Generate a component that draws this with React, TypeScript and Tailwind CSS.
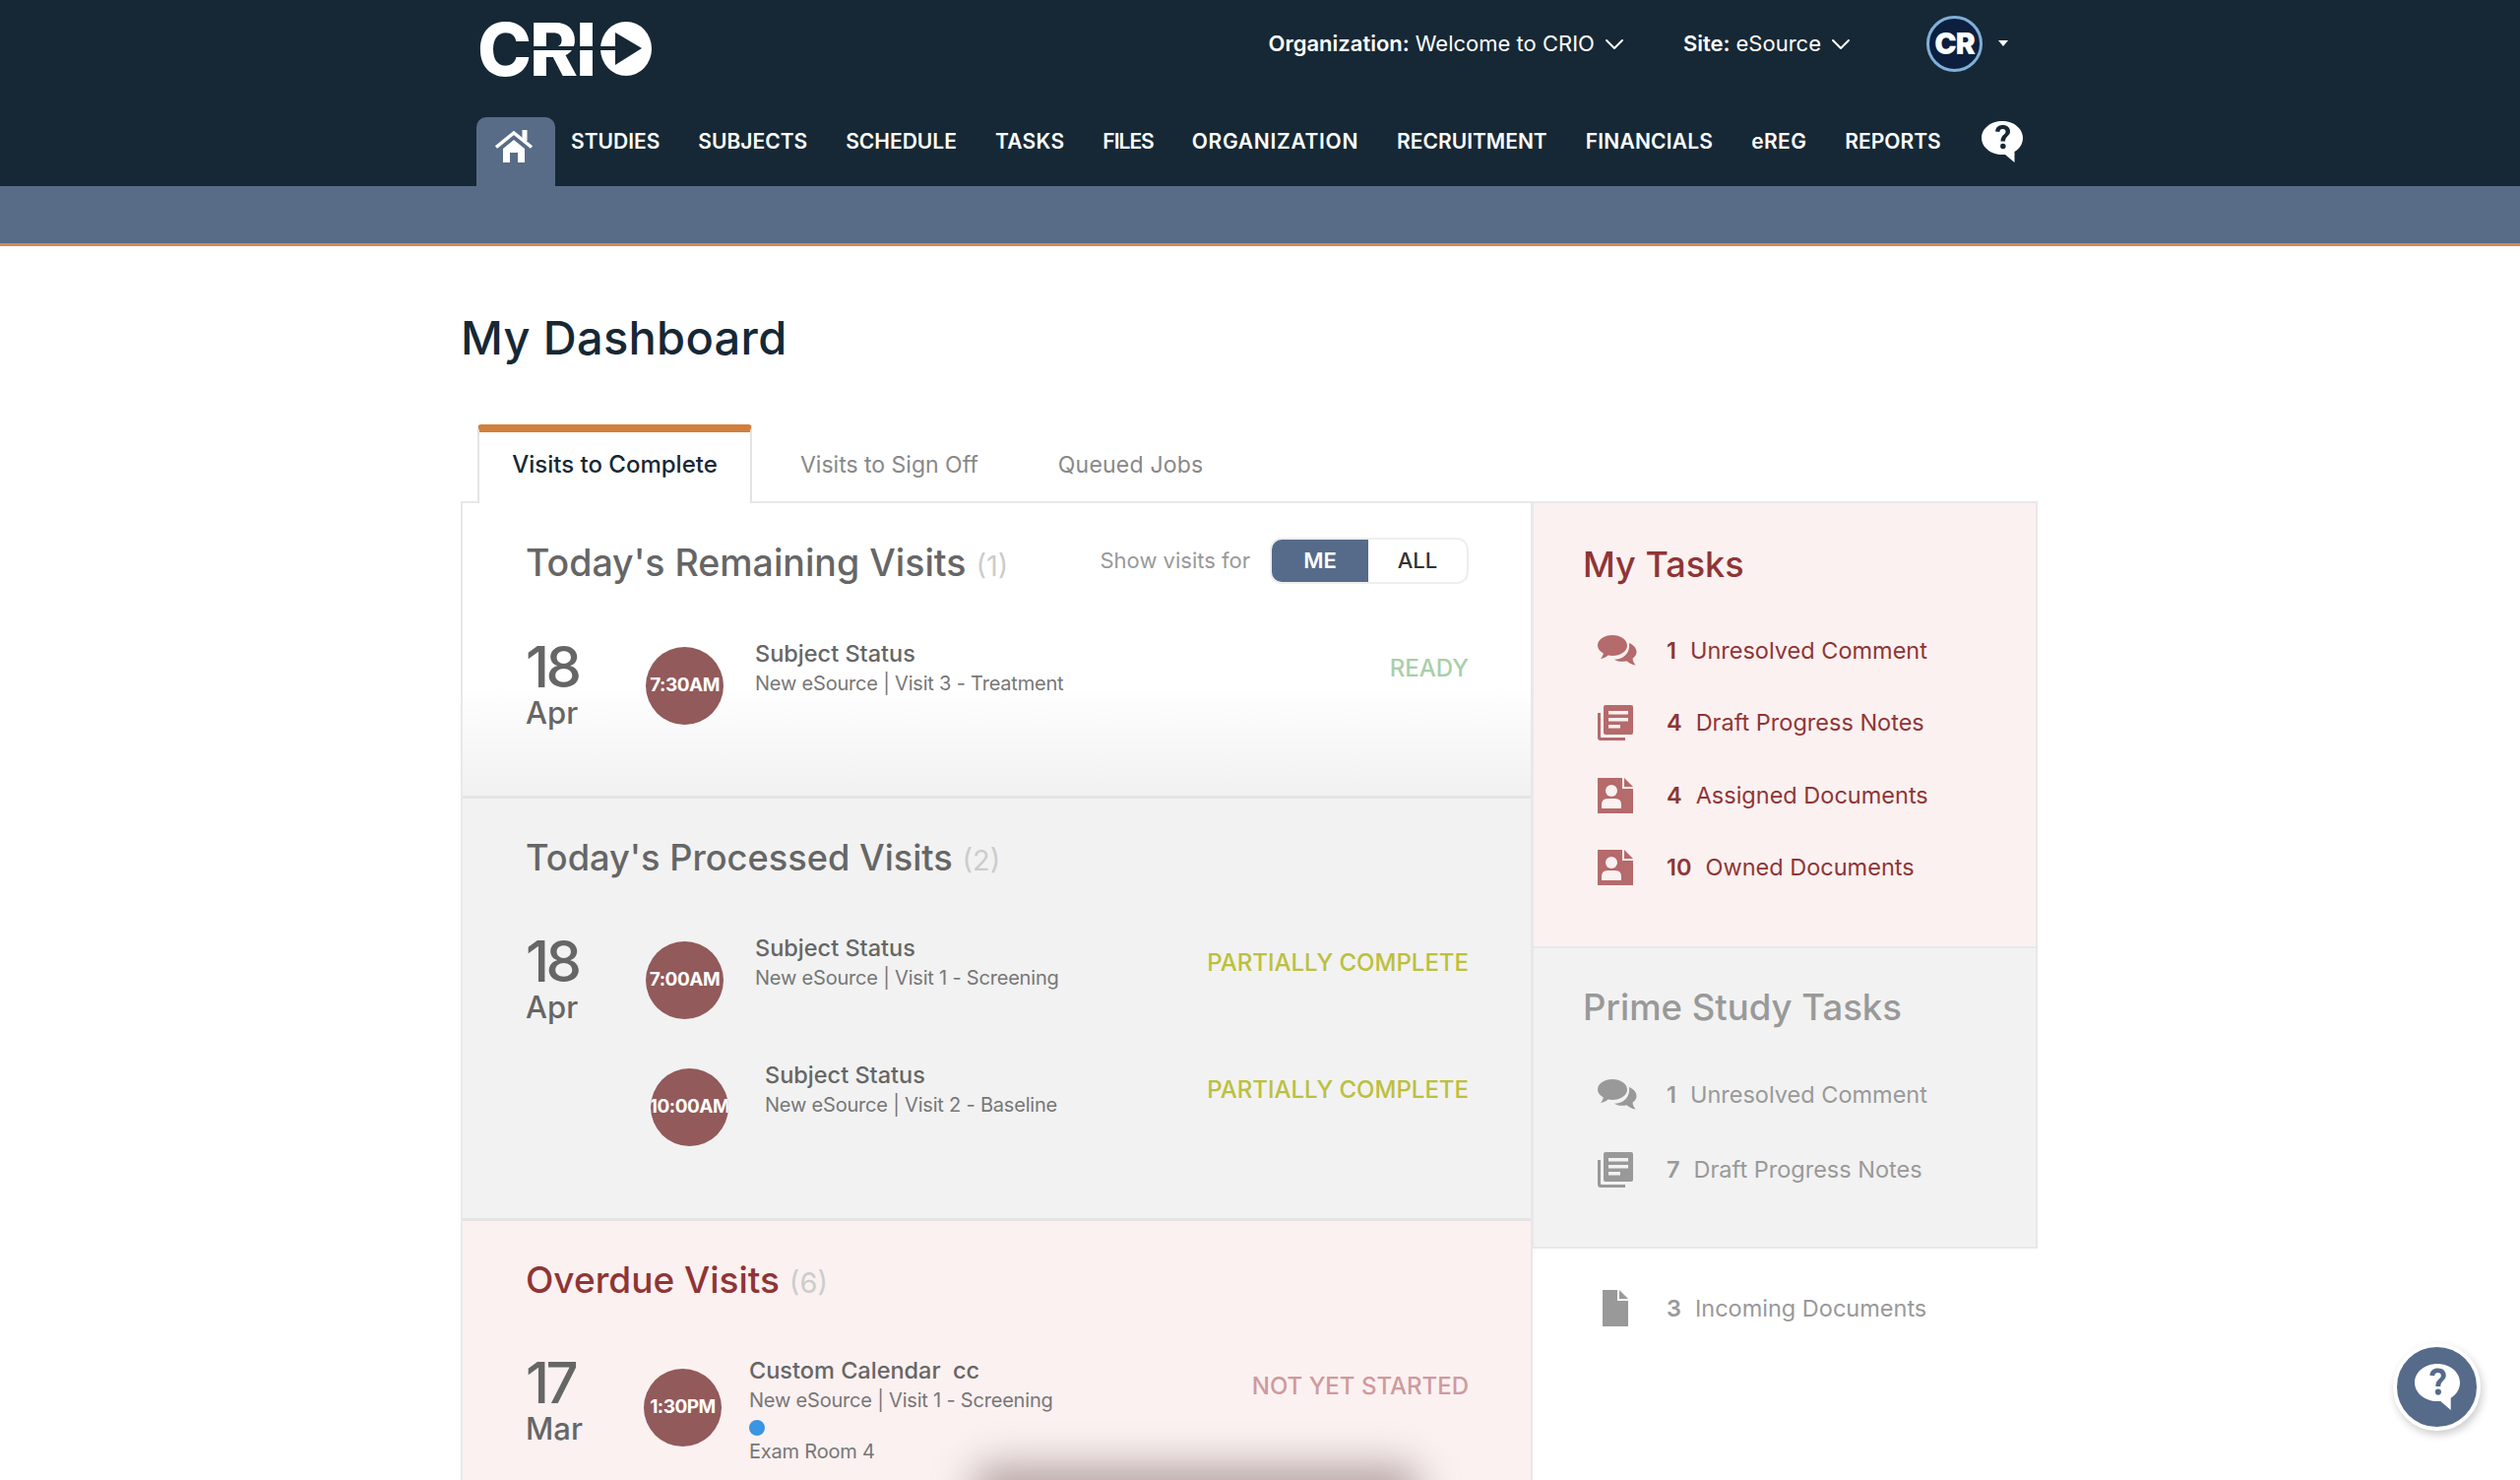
import { ChevronDown } from 'lucide-react';

const navItems = [
  { label: 'STUDIES', spacing: 'tracking-normal' },
  { label: 'SUBJECTS', spacing: 'tracking-normal' },
  { label: 'SCHEDULE', spacing: 'tracking-normal' },
  { label: 'TASKS', spacing: 'tracking-[0.3px]' },
  { label: 'FILES', spacing: 'tracking-[-1px]' },
  { label: 'ORGANIZATION', spacing: 'tracking-[0.7px]' },
  { label: 'RECRUITMENT', spacing: 'tracking-normal' },
  { label: 'FINANCIALS', spacing: 'tracking-[0.2px]' },
  { label: 'eREG', spacing: 'tracking-[0.4px]' },
  { label: 'REPORTS', spacing: 'tracking-normal' },
];

function HomeIcon() {
  return (
    <svg width="40" height="34" viewBox="0 0 40 34" fill="white">
      <path d="M9 20 L20 11 L31 20 V34 H24 V24 H16 V34 H9 Z" />
      <path d="M2 18.5 L20 4 L38 18.5" fill="none" stroke="white" strokeWidth="3.5" />
      <rect x="28.5" y="1" width="5" height="11" />
    </svg>
  );
}

function HelpBubble({ fill, mark, width, height }: { fill: string; mark: string; width: number; height: number }) {
  return (
    <svg width={width} height={height} viewBox="0 0 42 42" preserveAspectRatio="none">
      <path d="M21 0 C32.500 0 42 7.500 42 17 C42 23.500 38 28.500 33.500 31 L33.500 42 L24 34 C23 34 22 34 21 34 C9.500 34 0 26.500 0 17 C0 7.500 9.500 0 21 0 Z" fill={fill} />
      <path d="M14 10.500 C14.500 6 17.500 4 21.500 4 C26 4 29 6.500 29 10.500 C29 15 24 15.500 24 20.500 H19.500 C19.500 14 24.500 14 24.500 10.800 C24.500 9 23.500 8 21.500 8 C19.500 8 18.500 9.200 18.300 11 Z" fill={mark} />
      <circle cx="21.800" cy="25.500" r="2.800" fill={mark} />
    </svg>
  );
}

function CommentsIcon({ color }: { color: string }) {
  return (
    <svg width="40" height="31" viewBox="0 0 40 31" fill={color}>
      <path d="M15 0 C23 0 30 4.500 30 10.500 C30 16.500 23 21 15 21 C13.500 21 12 20.800 10.700 20.500 C8.500 22.500 6 23.500 3 24 C4.500 22.300 5.500 20.500 5.800 18.500 C2.300 16.500 0 13.700 0 10.500 C0 4.500 7 0 15 0 Z" />
      <path d="M32 8 C36.500 10 39.500 13.300 39.500 17 C39.500 19.700 38 22 35.500 23.800 C35.800 26 36.800 28.500 38.500 30.500 C35 30 32 28.500 29.500 26.300 C27.500 26.800 25 27 22.500 26.700 C20.500 26.500 18.500 25.800 17 24.800 C25 24.800 33.500 19 32 8 Z" />
    </svg>
  );
}

function NotesIcon({ color, bg }: { color: string; bg: string }) {
  return (
    <svg width="36" height="36" viewBox="0 0 36 36">
      <path d="M0 8 H3 V32 Q3 33 4 33 H28 V36 H3 Q0 36 0 33 Z" fill={color} />
      <rect x="6" y="0" width="30" height="30" rx="2" fill={color} />
      <rect x="11" y="6" width="20" height="3.500" fill={bg} />
      <rect x="11" y="13" width="20" height="3.500" fill={bg} />
      <rect x="11" y="20" width="12" height="3.500" fill={bg} />
    </svg>
  );
}

function PersonDocIcon({ color, bg }: { color: string; bg: string }) {
  return (
    <svg width="36" height="36" viewBox="0 0 36 36">
      <path d="M0 0 H25 V11 H36 V36 H0 Z" fill={color} />
      <path d="M27 0 L36 9 H27 Z" fill={color} />
      <circle cx="14" cy="13" r="6" fill={bg} />
      <path d="M4 31 V27 Q4 21 10 21 H18 Q24 21 24 27 V31 Z" fill={bg} />
    </svg>
  );
}

function FileIcon({ color }: { color: string }) {
  return (
    <svg width="26" height="37" viewBox="0 0 26 37">
      <path d="M0 0 H15 V11 H26 V37 H0 Z" fill={color} />
      <path d="M17 0 L26 9 H17 Z" fill={color} />
    </svg>
  );
}

function CrioLogo() {
  return (
    <div className="relative flex h-[55px] w-[178px] items-center">
      <span className="pl-[1px] font-['Inter',sans-serif] text-[74px] leading-none font-extrabold tracking-[-2px] text-white">CRI</span>
      <span className="absolute left-[56px] top-[25px] h-[4px] w-[76px] bg-[#162835]" />
      <svg className="absolute left-[126px] top-0" width="52" height="55" viewBox="0 0 52 55">
        <ellipse cx="26" cy="27.500" rx="26" ry="27.500" fill="white" />
        <path d="M0 25 H15 V11 L42 27 L15 44 V29 H0 Z" fill="#162835" />
      </svg>
    </div>
  );
}

function VisitRow({ time, title, sub, status, statusClass, room, indent }: {
  time: string;
  title: string;
  sub: string;
  status: string;
  statusClass: string;
  room?: string;
  indent?: boolean;
}) {
  return (
    <div className="flex flex-1 items-start">
      <div className={`flex h-[79px] w-[79px] shrink-0 items-center justify-center overflow-hidden rounded-full bg-[#925a5a] ${indent ? 'ml-[5px]' : ''}`}>
        <span className="text-[19px] font-bold whitespace-nowrap tracking-[-0.5px] text-white">{time}</span>
      </div>
      <div className={`flex-1 ${room ? 'ml-[28px] -mt-[12px]' : indent ? 'ml-[37px] -mt-[7px]' : 'ml-[32px] -mt-[7px]'}`}>
        <div className="text-[23.5px] leading-[28px] font-medium whitespace-pre text-[#666]">{title}</div>
        <div className="mt-[2px] text-[20px] leading-[28px] tracking-[-0.2px] text-[#777]">{sub}</div>
        {room && (
          <>
            <div className="mt-[6px] h-[16px] w-[16px] rounded-full bg-[#3b95e0]" />
            <div className="mt-[2px] text-[20px] leading-[28px] tracking-[-0.2px] text-[#777]">{room}</div>
          </>
        )}
      </div>
      <div className={`text-[24px] leading-[30px] font-medium whitespace-nowrap ${room ? 'mt-[3px]' : 'mt-[7px]'} ${statusClass}`}>{status}</div>
    </div>
  );
}

function DateBlock({ day, month, overdue }: { day: string; month: string; overdue?: boolean }) {
  return (
    <div className={`shrink-0 text-[#666] ${overdue ? 'w-[120px] -mt-[14px]' : 'w-[122px] -mt-[8px]'}`}>
      <div className="text-[58px] leading-[56px] font-medium tracking-[-3.5px]">{day}</div>
      <div className="mt-[2px] text-[31px] leading-[34px] font-medium">{month}</div>
    </div>
  );
}

function TaskRow({ icon, count, label, rowClass }: {
  icon: React.ReactNode;
  count: string;
  label: string;
  rowClass: string;
}) {
  return (
    <div className={`flex h-[37px] items-center text-[23.5px] ${rowClass}`}>
      <div className="flex w-[85px] shrink-0 items-center pl-[15px]">{icon}</div>
      <span className="font-semibold">{count}</span>
      <span className="ml-[14px]">{label}</span>
    </div>
  );
}

export default function App() {
  return (
    <div className="relative h-[1503px] w-full overflow-hidden bg-white font-['Inter',sans-serif]">
      {/* Header */}
      <header className="h-[189px] bg-[#162835] pl-[484px] text-white">
        <div className="flex h-[119px] items-start justify-between pr-[520px]">
          <div className="pt-[22px]">
            <CrioLogo />
          </div>
          <div className="flex items-center pt-[16px]">
            <div className="flex items-center text-[22px] leading-[57px]">
              <span className="font-semibold">Organization:</span>
              <span className="ml-[6px]">Welcome to CRIO</span>
              <ChevronDown className="ml-[4px]" size={32} strokeWidth={1.500} />
            </div>
            <div className="ml-[54px] flex items-center text-[22px] leading-[57px]">
              <span className="font-semibold">Site:</span>
              <span className="ml-[6px]">eSource</span>
              <ChevronDown className="ml-[4px]" size={32} strokeWidth={1.500} />
            </div>
            <div className="ml-[71px] flex h-[57px] w-[57px] items-center justify-center rounded-full border-[3px] border-[#7fb0d8] bg-[#0c1f3f]">
              <span className="text-[30px] font-black tracking-[-1px]">CR</span>
            </div>
            <div className="mb-[1px] ml-[16px] h-0 w-0 border-x-[5px] border-t-[6px] border-x-transparent border-t-white" />
          </div>
        </div>
        <nav className="flex h-[70px] items-start">
          <div className="flex h-[70px] w-[80px] justify-center rounded-t-[10px] bg-[#586c88] pr-[4px] pt-[12px]">
            <HomeIcon />
          </div>
          <div className="ml-[16px] flex items-center gap-[39px] pt-[10px] text-[21px] leading-[30px] font-semibold">
            {navItems.map((item) => (
              <span key={item.label} className={item.spacing}>{item.label}</span>
            ))}
          </div>
          <div className="ml-[41px] pt-[4px]">
            <HelpBubble fill="white" mark="#162835" width={42} height={42} />
          </div>
        </nav>
      </header>
      <div className="h-[61px] border-b-[3px] border-[#d18a50] bg-[#586c88]" />

      {/* Content */}
      <main className="ml-[468px] w-[1601px]">
        <h1 className="pt-[65px] text-[47px] leading-[56px] font-medium tracking-[0.3px] text-[#162835]">My Dashboard</h1>

        <div className="mt-[60px] flex h-[78px] pl-[17px]">
          <div className="relative z-10 -mb-[2px] w-[279px] rounded-t-[4px] border-x-2 border-t-[8px] border-x-[#e4e4e4] border-t-[#d1803c] bg-white pt-[18px] text-center text-[24px] leading-[30px] font-medium text-[#162835]">
            Visits to Complete
          </div>
          <div className="flex gap-[81px] pl-[49px] pt-[26px] text-[23px] leading-[30px] text-[#888]">
            <span>Visits to Sign Off</span>
            <span className="tracking-[0.2px]">Queued Jobs</span>
          </div>
        </div>

        <div className="flex items-start">
          {/* Visits column */}
          <div className="h-[1000px] w-[1089px] shrink-0 border-x-2 border-t-2 border-[#e8e8e8]">
            <section className="h-[300px] border-b-[3px] border-[#e4e4e4] bg-gradient-to-b from-white from-[62%] to-[#f1f1f1] pl-[64px] pr-[63px]">
              <div className="flex h-[118px] items-start justify-between pt-[36px]">
                <h2 className="text-[37.5px] leading-[50px] font-medium text-[#666]">
                  Today's Remaining Visits <span className="text-[29px] font-normal text-[#ccc]">(1)</span>
                </h2>
                <div className="-mt-[1px] flex items-center">
                  <span className="mr-[20px] text-[22px] text-[#999]">Show visits for</span>
                  <div className="flex h-[47px] w-[202px] overflow-hidden rounded-[12px] border-2 border-[#eeeeee] bg-white text-[22px]">
                    <div className="flex w-[98px] items-center justify-center bg-[#566b8a] font-semibold text-white">ME</div>
                    <div className="flex flex-1 items-center justify-center font-medium text-[#333]">ALL</div>
                  </div>
                </div>
              </div>
              <div className="mt-[28px] flex">
                <DateBlock day="18" month="Apr" />
                <VisitRow time="7:30AM" title="Subject Status" sub="New eSource | Visit 3 - Treatment" status="READY" statusClass="text-[#a8cfa8]" />
              </div>
            </section>

            <section className="h-[429px] border-b-[3px] border-[#e4e4e4] bg-[#f2f2f2] pl-[64px] pr-[63px]">
              <h2 className="pt-[35px] text-[36.2px] leading-[50px] font-medium text-[#666]">
                Today's Processed Visits <span className="text-[29px] font-normal text-[#ccc]">(2)</span>
              </h2>
              <div className="mt-[57px] flex">
                <DateBlock day="18" month="Apr" />
                <VisitRow time="7:00AM" title="Subject Status" sub="New eSource | Visit 1 - Screening" status="PARTIALLY COMPLETE" statusClass="text-[#bcc03c]" />
              </div>
              <div className="mt-[45px] flex pl-[122px]">
                <VisitRow indent time="10:00AM" title="Subject Status" sub="New eSource | Visit 2 - Baseline" status="PARTIALLY COMPLETE" statusClass="text-[#bcc03c]" />
              </div>
            </section>

            <section className="h-[300px] bg-[#fbf1f1] pl-[64px] pr-[63px]">
              <h2 className="pt-[35px] text-[37px] leading-[50px] font-medium text-[#8f3535]">
                Overdue Visits <span className="text-[29px] font-normal text-[#ccc]">(6)</span>
              </h2>
              <div className="mt-[62px] flex">
                <DateBlock overdue day="17" month="Mar" />
                <VisitRow time="1:30PM" title="Custom Calendar  cc" sub="New eSource | Visit 1 - Screening" status="NOT YET STARTED" statusClass="text-[#cf9a9c]" room="Exam Room 4" />
              </div>
            </section>
          </div>

          {/* Tasks column */}
          <aside className="-ml-[1px] w-[514px] shrink-0">
            <div className="h-[452px] border-x-2 border-t-2 border-[#e8e8e8] bg-[#fbf1f1] pl-[50px] text-[#8f3535]">
              <h2 className="pt-[37px] text-[36px] leading-[50px] font-medium">My Tasks</h2>
              <div className="mt-[44px] flex flex-col gap-[36.5px]">
                <TaskRow rowClass="text-[#8f3535]" count="1" label="Unresolved Comment" icon={<CommentsIcon color="#b56a6b" />} />
                <TaskRow rowClass="text-[#8f3535]" count="4" label="Draft Progress Notes" icon={<NotesIcon color="#b56a6b" bg="#fbf1f1" />} />
                <TaskRow rowClass="text-[#8f3535]" count="4" label="Assigned Documents" icon={<PersonDocIcon color="#b56a6b" bg="#fbf1f1" />} />
                <TaskRow rowClass="text-[#8f3535]" count="10" label="Owned Documents" icon={<PersonDocIcon color="#b56a6b" bg="#fbf1f1" />} />
              </div>
            </div>
            <div className="h-[307px] border-2 border-[#e8e8e8] bg-[#f2f2f2] pl-[50px]">
              <h2 className="pt-[35px] text-[36.5px] leading-[50px] font-medium text-[#999]">Prime Study Tasks</h2>
              <div className="mt-[45px] flex flex-col gap-[39px]">
                <TaskRow rowClass="text-[#999]" count="1" label="Unresolved Comment" icon={<CommentsIcon color="#999" />} />
                <TaskRow rowClass="text-[#999]" count="7" label="Draft Progress Notes" icon={<NotesIcon color="#999" bg="#f2f2f2" />} />
              </div>
            </div>
            <div className="pl-[52px] pt-[42px]">
              <TaskRow rowClass="text-[#999]" count="3" label="Incoming Documents" icon={<div className="pl-[5px]"><FileIcon color="#999" /></div>} />
            </div>
          </aside>
        </div>
      </main>

      {/* Blurred chat shadow at the bottom of the page */}
      <div className="absolute bottom-[-40px] left-[985px] h-[56px] w-[460px] rounded-full bg-[#8a7474] opacity-60 blur-[20px]" />

      {/* Floating help button */}
      <div className="absolute left-[2431px] top-[1364px] flex h-[89px] w-[89px] items-center justify-center rounded-full border-[4px] border-white bg-[#566b8a] shadow-[2px_4px_8px_rgba(0,0,0,0.2)]">
        <HelpBubble fill="white" mark="#566b8a" width={46} height={47} />
      </div>
    </div>
  );
}
